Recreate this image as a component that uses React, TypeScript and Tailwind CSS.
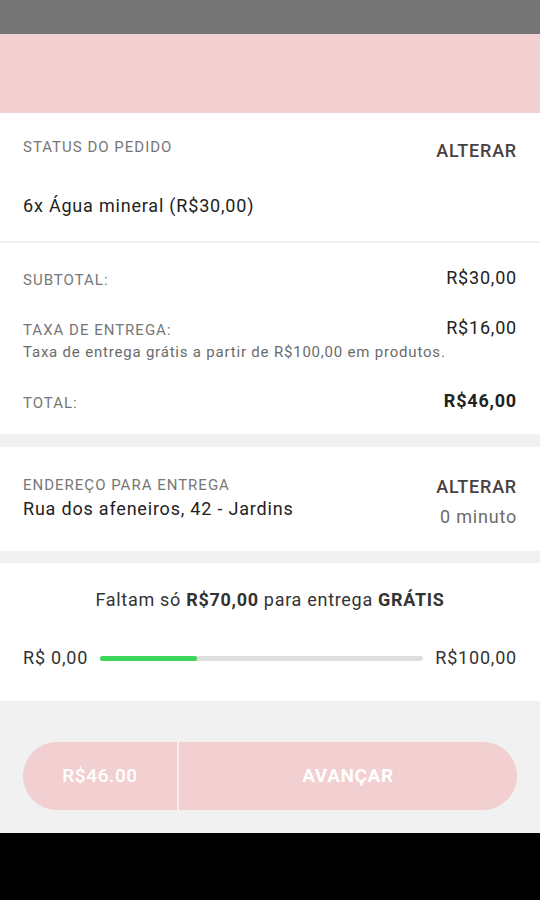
import React from 'react';

const Row: React.FC<{ label: string; value: string; bold?: boolean; note?: string }> = ({ label, value, bold, note }) => (
  <div>
    <div className="flex items-end justify-between">
      <span className="text-[15px] tracking-[1px] text-[#777] leading-[18px]">{label}</span>
      <span className={`text-[18px] tracking-[0.8px] leading-[22px] text-[#222] ${bold ? 'font-bold' : ''}`}>{value}</span>
    </div>
    {note && <p className="text-[15px] tracking-[0.8px] leading-[18px] text-[#6b6b6b] mt-[4px]">{note}</p>}
  </div>
);

const App: React.FC = () => {
  return (
    <div className="w-[540px] h-[900px] flex flex-col bg-[#f1f1f1] font-['Roboto',sans-serif] overflow-hidden">
      <div className="h-[34px] bg-[#757575] shrink-0" />
      <div className="h-[79px] bg-[#f2d0d1] shrink-0" />

      <div className="bg-white px-[23px] pt-[25px] h-[130px] border-b-2 border-[#f0f0f0]">
        <div className="flex justify-between items-start">
          <span className="text-[15px] tracking-[1px] text-[#777] leading-[18px]">STATUS DO PEDIDO</span>
          <span className="text-[18px] tracking-[0.8px] font-medium text-[#4a3f42] leading-[22px] mt-[2px]">ALTERAR</span>
        </div>
        <p className="text-[18px] tracking-[0.8px] text-[#222] leading-[22px] mt-[33px]">6x Água mineral (R$30,00)</p>
      </div>

      <div className="bg-white px-[23px] pt-[24px] h-[191px] flex flex-col">
        <Row label="SUBTOTAL:" value="R$30,00" />
        <div className="mt-[28px]">
          <Row label="TAXA DE ENTREGA:" value="R$16,00" note="Taxa de entrega grátis a partir de R$100,00 em produtos." />
        </div>
        <div className="mt-[29px]">
          <Row label="TOTAL:" value="R$46,00" bold />
        </div>
      </div>

      <div className="bg-white mt-[13px] h-[104px] px-[23px] pt-[26px] flex justify-between">
        <div className="mt-[3px]">
          <p className="text-[15px] tracking-[1px] text-[#777] leading-[18px]">ENDEREÇO PARA ENTREGA</p>
          <p className="text-[18px] tracking-[0.8px] text-[#222] leading-[22px] mt-[4px]">Rua dos afeneiros, 42 - Jardins</p>
        </div>
        <div className="flex flex-col items-end">
          <span className="text-[18px] tracking-[0.8px] font-medium text-[#4a3f42] leading-[22px] mt-[3px]">ALTERAR</span>
          <span className="text-[18px] tracking-[0.8px] text-[#6b6b6b] leading-[22px] mt-[8px]">0 minuto</span>
        </div>
      </div>

      <div className="bg-white mt-[12px] h-[138px] px-[23px] pt-[26px]">
        <p className="text-center text-[18px] tracking-[0.7px] text-[#333] leading-[22px]">
          Faltam só <span className="font-bold">R$70,00</span> para entrega <span className="font-bold">GRÁTIS</span>
        </p>
        <div className="flex items-center mt-[36px] gap-[12px]">
          <span className="text-[18px] tracking-[0.8px] text-[#333] leading-[22px]">R$ 0,00</span>
          <div className="flex-1 h-[5px] bg-[#dedede] rounded-full">
            <div className="h-full bg-[#3bd55b] rounded-full" style={{ width: '30%' }} />
          </div>
          <span className="text-[18px] tracking-[0.8px] text-[#333] leading-[22px]">R$100,00</span>
        </div>
      </div>

      <div className="flex-1 px-[23px] pt-[41px]">
        <div className="h-[68px] rounded-full bg-[#f2cfd0] flex overflow-hidden">
          <div className="w-[154px] flex items-center justify-center text-white text-[19px] tracking-[0.6px] font-medium">R$46.00</div>
          <div className="w-[2px] bg-[#fbe9ea]" />
          <div className="flex-1 flex items-center justify-center text-white text-[19px] tracking-[0.6px] font-bold">AVANÇAR</div>
        </div>
      </div>

      <div className="h-[67px] bg-black shrink-0" />
    </div>
  );
};

export default App;
